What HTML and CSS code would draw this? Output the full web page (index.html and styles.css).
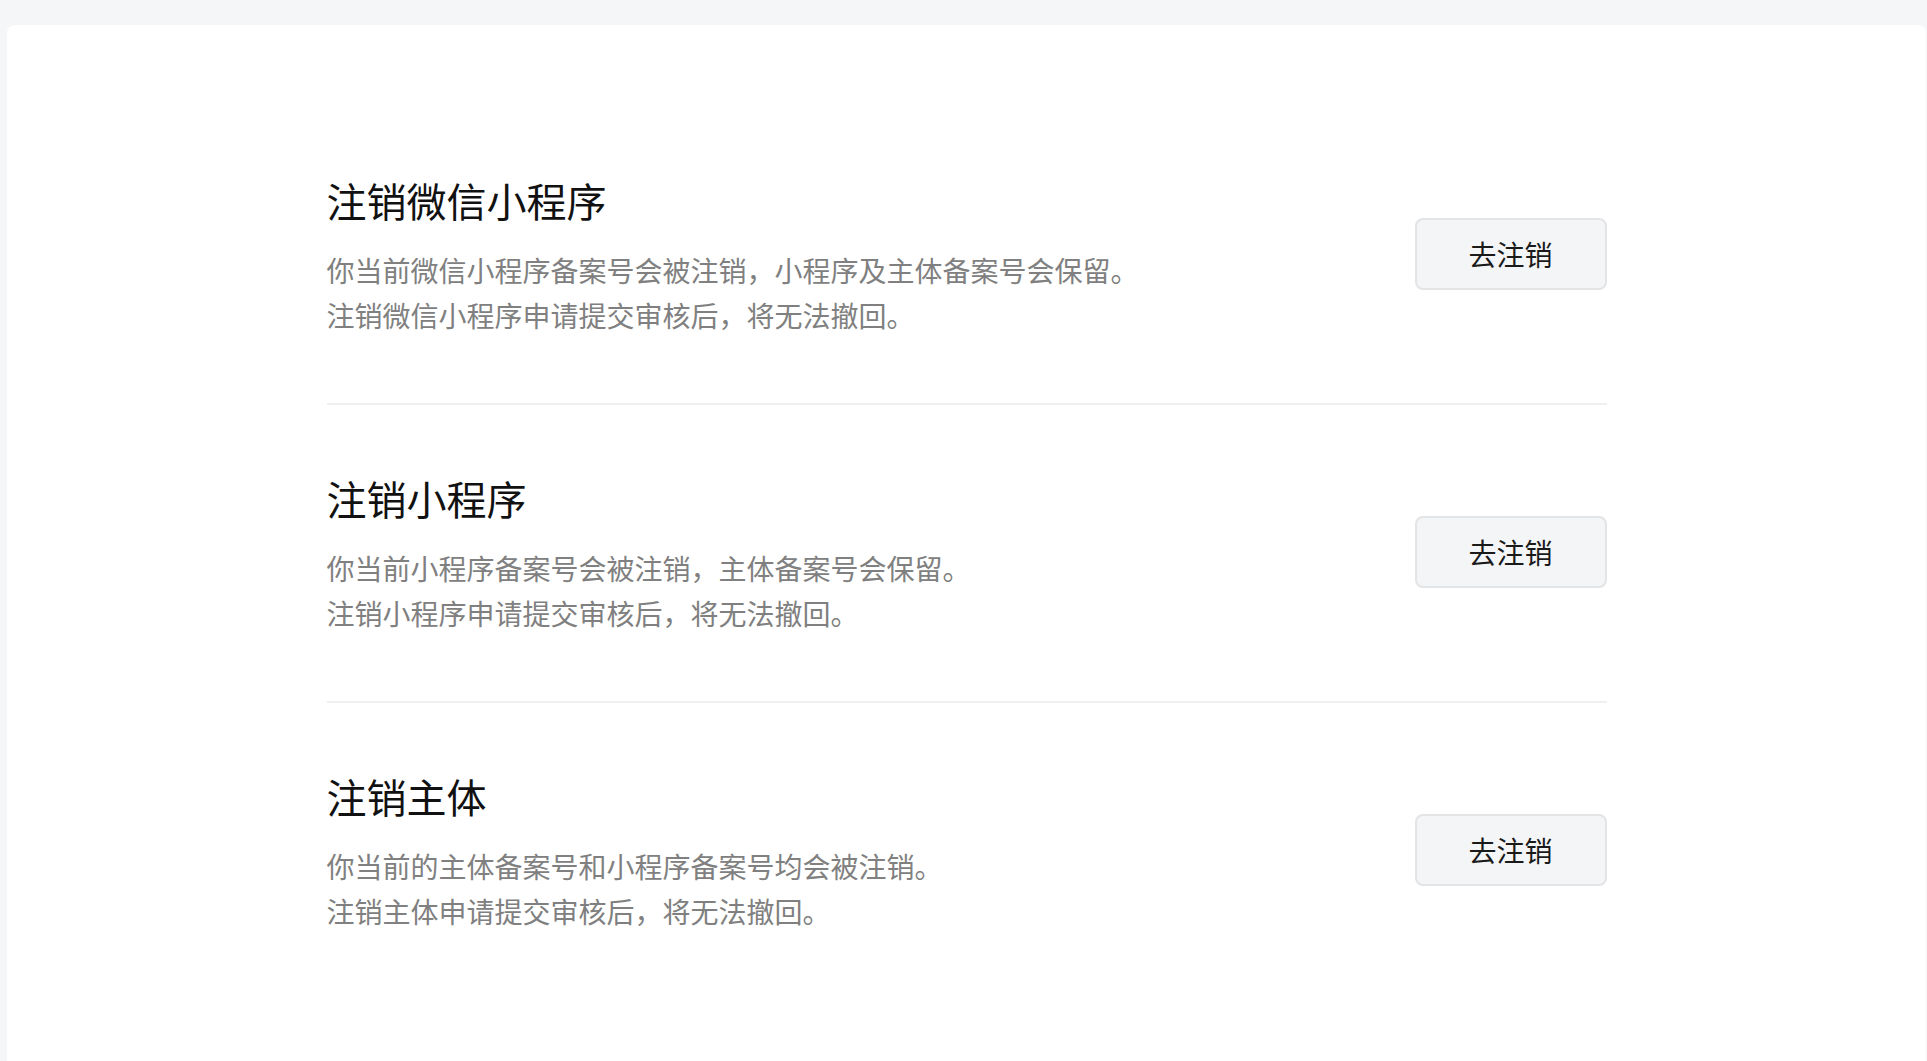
FILE: index.html
```html
<!DOCTYPE html>
<html lang="zh-CN">
<head>
<meta charset="utf-8">
<title>注销</title>
<link rel="stylesheet" href="styles.css">
</head>
<body>
<main class="card">
  <div class="list">
    <section class="item">
      <div class="info">
        <h2 class="title">注销微信小程序</h2>
        <p class="desc">你当前微信小程序备案号会被注销，小程序及主体备案号会保留。<br>注销微信小程序申请提交审核后，将无法撤回。</p>
      </div>
      <button class="btn">去注销</button>
    </section>
    <section class="item">
      <div class="info">
        <h2 class="title">注销小程序</h2>
        <p class="desc">你当前小程序备案号会被注销，主体备案号会保留。<br>注销小程序申请提交审核后，将无法撤回。</p>
      </div>
      <button class="btn">去注销</button>
    </section>
    <section class="item">
      <div class="info">
        <h2 class="title">注销主体</h2>
        <p class="desc">你当前的主体备案号和小程序备案号均会被注销。<br>注销主体申请提交审核后，将无法撤回。</p>
      </div>
      <button class="btn">去注销</button>
    </section>
  </div>
</main>
</body>
</html>
```

FILE: styles.css
```css
html, body {
  margin: 0;
  padding: 0;
  height: 100%;
}
body {
  background: #f5f6f7;
  font-family: "Noto Sans CJK SC", "Noto Sans", sans-serif;
  overflow: hidden;
}
.card {
  margin: 25px 1px 0 7px;
  min-height: 1100px;
  background: #ffffff;
  border-radius: 8px 8px 0 0;
  padding-top: 82px;
  box-sizing: border-box;
}
.list {
  width: 1280px;
  margin: 0 auto;
}
.item {
  display: flex;
  align-items: center;
  justify-content: space-between;
  padding: 65px 0;
  border-bottom: 2px solid #f0f0f0;
}
.item:last-child {
  border-bottom: none;
}
.title {
  margin: 0 0 20px;
  font-size: 40px;
  line-height: 56px;
  font-weight: 400;
  color: #111111;
}
.desc {
  margin: 0;
  font-size: 28px;
  line-height: 45px;
  color: #808080;
}
.btn {
  width: 192px;
  height: 72px;
  box-sizing: border-box;
  border: 2px solid #e3e4e6;
  border-radius: 8px;
  background: #f4f5f7;
  font-family: inherit;
  font-size: 28px;
  color: #1a1a1a;
  padding: 0;
  margin-top: -2px;
}
```
